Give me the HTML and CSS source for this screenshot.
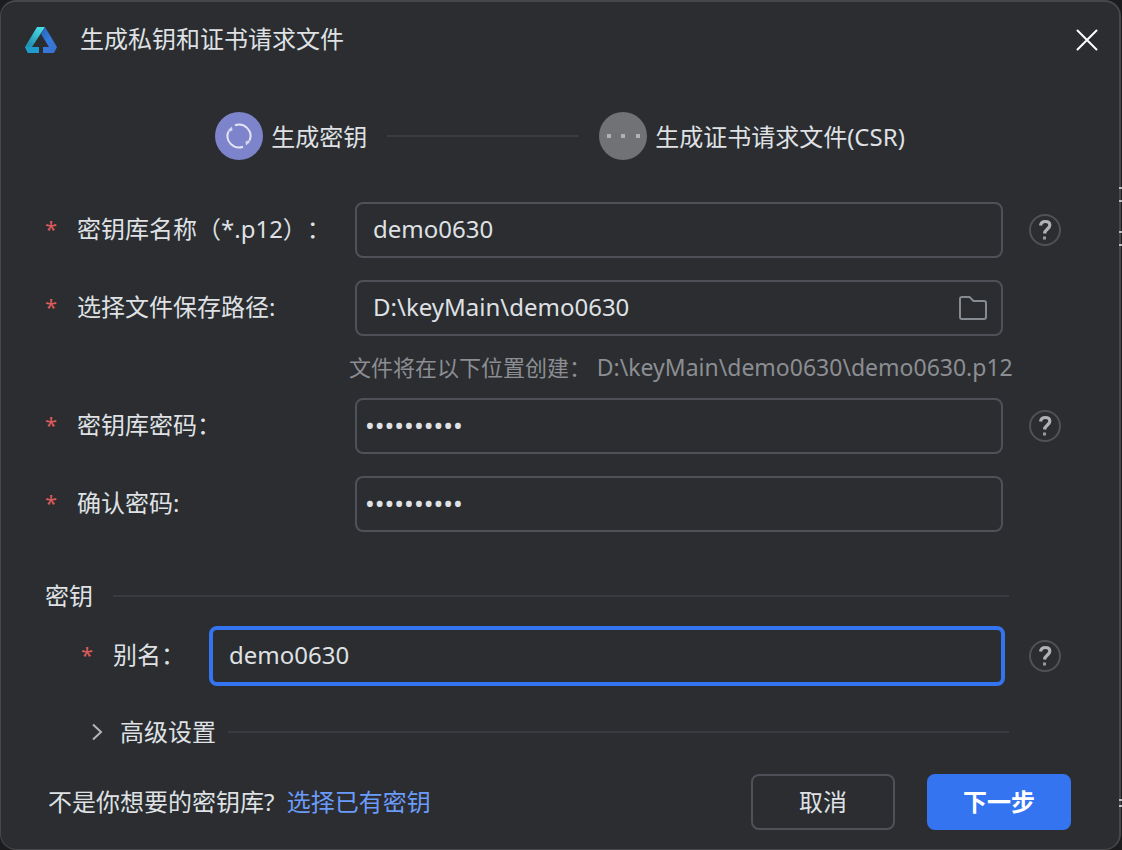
FILE: index.html
```html
<!DOCTYPE html>
<html lang="zh-CN">
<head>
<meta charset="utf-8">
<meta name="viewport" content="width=device-width, initial-scale=1">
<title>生成私钥和证书请求文件</title>
<link rel="stylesheet" href="styles.css">
</head>
<body>
<svg width="0" height="0" class="defs" aria-hidden="true">
  <symbol id="help" viewBox="0 0 32 32">
    <circle cx="16" cy="16" r="15" fill="none" stroke="#515255" stroke-width="2"/>
    <path d="M11.500 11.500C12 8.700 13.800 7.500 16.300 7.500C19.200 7.500 20.800 9 20.800 11.300C20.800 14.600 16 15.400 15.500 19.500" fill="none" stroke="#b0b1b4" stroke-width="3.200"/>
    <rect x="14" y="22.500" width="3" height="3" fill="#98999c"/>
  </symbol>
</svg>
<main class="dialog">
  <header class="titlebar">
    <svg class="logo" viewBox="0 0 32 26" aria-hidden="true">
      <defs>
        <linearGradient id="teal" x1="0.700" y1="0" x2="0.200" y2="1"><stop offset="0" stop-color="#48dce4"/><stop offset="0.700" stop-color="#2494b4"/><stop offset="1" stop-color="#208cb0"/></linearGradient>
        <linearGradient id="blue" x1="0" y1="0" x2="1" y2="1"><stop offset="0" stop-color="#2864b8"/><stop offset="0.500" stop-color="#347cdc"/><stop offset="1" stop-color="#3c6ccc"/></linearGradient>
      </defs>
      <path d="M12 0H20L7 20H14V26H3L0 20Z" fill="url(#teal)"/>
      <path d="M0 20H14V26H3Z" fill="#209ccc"/>
      <path d="M20 0L32 20L29 26H18V20H24L16 7Z" fill="url(#blue)"/>
    </svg>
    <h1 class="title">生成私钥和证书请求文件</h1>
    <button class="close" type="button" aria-label="关闭">
      <svg viewBox="0 0 22 22" aria-hidden="true"><path d="M1.500 1.500L20.500 20.500M20.500 1.500L1.500 20.500" stroke="#fff" stroke-width="2" stroke-linecap="round"/></svg>
    </button>
  </header>

  <ol class="steps">
    <li class="step">
      <svg class="step-icon" viewBox="0 0 48 48" aria-hidden="true">
        <circle cx="24" cy="24" r="24" fill="#7d84cb"/>
        <g fill="none" stroke="#e3e5f5" stroke-width="2">
          <path d="M20 13.300A11.500 11.500 0 0 1 34.600 28.500"/>
          <path d="M28 34.700A11.500 11.500 0 0 1 13.400 19.500"/>
        </g>
        <path d="M13 18L17 14.500L17.500 18.500L14 20Z M35 30L31 33.500L30.500 29.500L34 28Z" fill="#d2d5ef"/>
      </svg>
      <span>生成密钥</span>
    </li>
    <li class="step-line" aria-hidden="true"></li>
    <li class="step">
      <svg class="step-icon" viewBox="0 0 48 48" aria-hidden="true">
        <circle cx="24" cy="24" r="24" fill="#717275"/>
        <path d="M8 22h4v4h-4zM22 22h4v4h-4zM37 22h4v4h-4z" fill="#b2b2b4"/>
      </svg>
      <span>生成证书请求文件(CSR)</span>
    </li>
  </ol>

  <form class="form">
    <div class="row">
      <span class="star">*</span>
      <label for="store">密钥库名称（*.p12）：</label>
      <input class="field" id="store" type="text" value="demo0630">
      <button class="help" type="button" aria-label="帮助"><svg viewBox="0 0 32 32"><use href="#help"/></svg></button>
    </div>
    <div class="row">
      <span class="star">*</span>
      <label for="path">选择文件保存路径:</label>
      <div class="field path-field">
        <input class="path-input" id="path" type="text" value="D:\keyMain\demo0630">
        <button class="browse" type="button" aria-label="选择文件夹">
          <svg viewBox="0 0 28 24" aria-hidden="true"><path d="M3 1H10.500L14.500 5H25Q27 5 27 7V21Q27 23 25 23H3Q1 23 1 21V3Q1 1 3 1Z" fill="none" stroke="#868a91" stroke-width="2"/></svg>
        </button>
      </div>
    </div>
    <p class="hint">文件将在以下位置创建： <span class="hint-path">D:\keyMain\demo0630\demo0630.p12</span></p>
    <div class="row">
      <span class="star">*</span>
      <label for="pass">密钥库密码：</label>
      <input class="field password" id="pass" type="password" value="demodemo06">
      <button class="help" type="button" aria-label="帮助"><svg viewBox="0 0 32 32"><use href="#help"/></svg></button>
    </div>
    <div class="row">
      <span class="star">*</span>
      <label for="confirm">确认密码:</label>
      <input class="field password" id="confirm" type="password" value="demodemo06">
    </div>

    <div class="section">
      <h2 class="section-title">密钥</h2>
      <span class="rule"></span>
    </div>
    <div class="row row-alias">
      <span class="star">*</span>
      <label for="alias">别名：</label>
      <input class="field active" id="alias" type="text" value="demo0630">
      <button class="help" type="button" aria-label="帮助"><svg viewBox="0 0 32 32"><use href="#help"/></svg></button>
    </div>
    <div class="section section-advanced">
      <button class="expander" type="button" aria-expanded="false">
        <svg class="chevron" viewBox="0 0 12 18" aria-hidden="true"><path d="M2 1.500L10 9L2 16.500" fill="none" stroke="#b2b4b9" stroke-width="2"/></svg>
        <span>高级设置</span>
      </button>
      <span class="rule"></span>
    </div>

    <footer class="footer">
      <p class="question">不是你想要的密钥库? <a class="link" href="#existing">选择已有密钥</a></p>
      <button class="btn" type="button">取消</button>
      <button class="btn btn-primary" type="submit">下一步</button>
    </footer>
  </form>
</main>
<svg class="backdrop-edge" viewBox="0 0 3 850" aria-hidden="true">
  <path d="M0 187h3v2H0zM0 200h3v2H0zM0 231h3v2H0zM0 244h3v2H0zM0 799h3v2H0zM0 805h3v2H0z" fill="#b9bbbe"/>
</svg>
</body>
</html>
```
FILE: styles.css
```css
* {
  box-sizing: border-box;
}

body {
  position: relative;
  margin: 0;
  background: #1c1c1e;
  color: #dfe1e5;
  font: 24px/32px "Noto Sans", "Noto Sans CJK SC", sans-serif;
  text-spacing-trim: space-all;
}

.defs {
  position: absolute;
}

.backdrop-edge {
  position: absolute;
  top: 0;
  right: 0;
  width: 3px;
  height: 850px;
}

.dialog {
  display: flex;
  flex-direction: column;
  min-height: 100vh;
  margin-right: 1px;
  background: #2b2d30;
  border: 1px solid #45474a;
  border-top-width: 2px;
  border-right-width: 2px;
  border-radius: 16px;
}

button {
  padding: 0;
  border: 0;
  background: none;
  color: inherit;
  font: inherit;
  cursor: pointer;
}

svg {
  display: block;
}

h1,
h2,
p,
ol {
  margin: 0;
  padding: 0;
  font-size: inherit;
  font-weight: 400;
}

.titlebar {
  display: flex;
  align-items: center;
  height: 76px;
  padding: 0 21px 0 24px;
}

.logo {
  width: 32px;
  height: 26px;
  margin-right: 23px;
}

.title {
  flex: 1;
  padding-bottom: 2px;
}

.close svg {
  width: 22px;
  height: 22px;
}

.steps {
  display: flex;
  justify-content: center;
  align-items: center;
  margin-top: 34px;
  list-style: none;
}

.step {
  display: flex;
  align-items: center;
  gap: 8px;
}

.step span {
  padding-top: 2px;
}

.step-icon {
  width: 48px;
  height: 48px;
}

.step-line {
  width: 192px;
  height: 2px;
  margin: 0 20px;
  background: #393b40;
}

.form {
  padding: 42px 58px 18px 44px;
}

.row {
  display: grid;
  grid-template-columns: 32px 278px 1fr 26px 32px;
  align-items: center;
  margin-bottom: 22px;
}

.row label {
  padding-bottom: 2px;
}

.star {
  padding-bottom: 4px;
  color: #db5c5c;
  font-size: 22px;
}

.field {
  width: 100%;
  min-width: 0;
  height: 56px;
  padding: 0 16px 4px;
  border: 2px solid #4e5157;
  border-radius: 8px;
  background: transparent;
  color: inherit;
  font: inherit;
  outline: none;
}

.password {
  padding: 0 8px 2px;
  font-size: 26px;
}

.path-field {
  display: flex;
  align-items: center;
  padding: 0 14px 0 16px;
}

.path-input {
  flex: 1;
  min-width: 0;
  padding: 0 0 2px;
  border: 0;
  background: none;
  color: inherit;
  font: inherit;
  outline: none;
}

.browse svg {
  width: 28px;
  height: 24px;
}

.help {
  grid-column: 5;
}

.help svg {
  width: 32px;
  height: 32px;
}

.hint {
  margin: -7px 0 15px 304px;
  color: #8c8e93;
  font-size: 22px;
  white-space: nowrap;
}

.hint-path {
  font-size: 23px;
}

.section {
  display: flex;
  align-items: center;
  gap: 20px;
  margin: 48px 52px 14px 0;
}

.rule {
  flex: 1;
  height: 2px;
  background: #393b40;
}

.row-alias {
  grid-template-columns: 32px 96px 1fr 24px 32px;
  margin: 0 0 30px 36px;
}

.active {
  height: 60px;
  border: 4px solid #3574f0;
}

.section-advanced {
  gap: 12px;
  margin: 0 52px 0 46px;
}

.expander {
  display: flex;
  align-items: center;
  gap: 17px;
}

.chevron {
  width: 12px;
  height: 18px;
}

.footer {
  display: flex;
  align-items: center;
  gap: 32px;
  margin: 26px -10px 0 3px;
}

.question {
  flex: 1;
}

.link {
  margin-left: 6px;
  color: #6b9bfa;
  text-decoration: none;
}

.btn {
  width: 144px;
  height: 56px;
  border: 2px solid #4e5157;
  border-radius: 8px;
}

.btn-primary {
  border-color: #3574f0;
  background: #3574f0;
  color: #fff;
  font-weight: 700;
}
```
